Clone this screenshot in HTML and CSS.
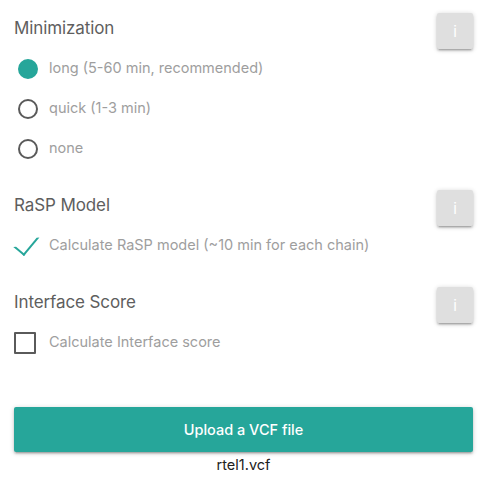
FILE: index.html
```html
<!DOCTYPE html>
<html>
<head>
<meta charset="utf-8">
<link rel="stylesheet" href="styles.css">
</head>
<body>
<div class="page">
  <section class="group">
    <div class="group-head">
      <h2 class="title">Minimization</h2>
      <button class="info-btn">i</button>
    </div>
    <div class="options">
      <label class="opt"><input type="radio" name="min" checked><span class="radio">long (5-60 min, recommended)</span></label>
      <label class="opt"><input type="radio" name="min"><span class="radio">quick (1-3 min)</span></label>
      <label class="opt"><input type="radio" name="min"><span class="radio">none</span></label>
    </div>
  </section>
  <section class="group">
    <div class="group-head">
      <h2 class="title">RaSP Model</h2>
      <button class="info-btn">i</button>
    </div>
    <div class="options">
      <label class="opt"><input type="checkbox" checked><span class="check">Calculate RaSP model (~10 min for each chain)</span></label>
    </div>
  </section>
  <section class="group">
    <div class="group-head">
      <h2 class="title">Interface Score</h2>
      <button class="info-btn">i</button>
    </div>
    <div class="options">
      <label class="opt"><input type="checkbox"><span class="check">Calculate Interface score</span></label>
    </div>
  </section>
  <div class="upload">
    <button class="upload-btn">Upload a VCF file</button>
    <div class="filename">rtel1.vcf</div>
  </div>
</div>
</body>
</html>
```

FILE: styles.css
```css
* { box-sizing: border-box; }
html, body { margin: 0; padding: 0; background: #fff; }
body {
  font-family: Inter, "Noto Sans", Roboto, "Liberation Sans", sans-serif;
  color: #212121;
}
.page {
  padding: 13px 16px 0 14px;
  display: flex;
  flex-direction: column;
}
.group { display: flex; flex-direction: column; margin-bottom: 30px; }
.group-head {
  display: flex;
  align-items: flex-start;
  justify-content: space-between;
  height: 36px;
}
.title {
  margin: 0;
  padding-top: 5px;
  font-size: 17px;
  line-height: 20px;
  font-weight: 400;
  color: #5e5e5e;
  letter-spacing: -0.1px;
}
.info-btn {
  width: 36px;
  height: 36px;
  border: none;
  border-radius: 2px;
  background: #dfdfdf;
  color: #fff;
  font-family: inherit;
  font-size: 15px;
  padding: 0;
  box-shadow: 0 2px 2px 0 rgba(0,0,0,0.14), 0 3px 1px -2px rgba(0,0,0,0.12), 0 1px 5px 0 rgba(0,0,0,0.2);
}
.options {
  display: flex;
  flex-direction: column;
  gap: 15px;
  padding-top: 6px;
}
.opt { display: block; height: 25px; }
.opt input { position: absolute; opacity: 0; pointer-events: none; }
.radio, .check {
  position: relative;
  display: inline-block;
  height: 25px;
  line-height: 25px;
  padding-left: 35px;
  font-size: 14.5px;
  color: #9e9e9e;
}
.radio::before {
  content: '';
  position: absolute;
  left: 0; top: 0;
  margin: 4px;
  width: 16px; height: 16px;
  border: 2px solid #5a5a5a;
  border-radius: 50%;
}
input:checked + .radio::before {
  border-color: #26a69a;
  background: #26a69a;
}
.check::before {
  content: '';
  position: absolute;
  left: 0; top: 0;
  margin-top: 3px;
  width: 18px; height: 18px;
  border: 2px solid #5a5a5a;
  border-radius: 1px;
}
input:checked + .check::before {
  top: 0; left: -4px;
  margin-top: 0;
  width: 10px; height: 20px;
  border-top: 2px solid transparent;
  border-left: 2px solid transparent;
  border-right: 2px solid #26a69a;
  border-bottom: 2px solid #26a69a;
  transform: rotate(40deg);
  transform-origin: 100% 100%;
  border-radius: 0;
}
.upload {
  margin-top: 23px;
  display: flex;
  flex-direction: column;
  align-items: center;
}
.upload-btn {
  width: 100%;
  height: 45px;
  border: none;
  border-radius: 2px;
  background: #26a69a;
  color: #fff;
  font-family: inherit;
  font-size: 14.5px;
  font-weight: 500;
  box-shadow: 0 2px 2px 0 rgba(0,0,0,0.14), 0 3px 1px -2px rgba(0,0,0,0.12), 0 1px 5px 0 rgba(0,0,0,0.2);
}
.filename {
  margin-top: 3px;
  font-size: 14.5px;
  line-height: 20px;
  color: #212121;
}
```
